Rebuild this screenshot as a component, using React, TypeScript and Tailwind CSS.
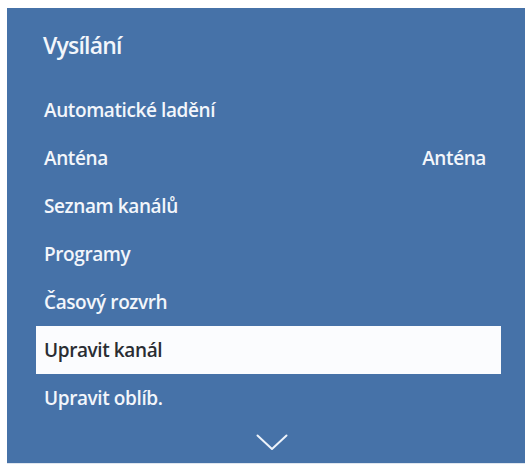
import React from 'react';

const items = [
  { label: 'Automatické ladění' },
  { label: 'Anténa', value: 'Anténa' },
  { label: 'Seznam kanálů' },
  { label: 'Programy' },
  { label: 'Časový rozvrh' },
  { label: 'Upravit kanál', selected: true },
  { label: 'Upravit oblíb.' },
];

const App: React.FC = () => {
  return (
    <div
      className="w-[532px] h-[468px] bg-white pt-[8px] pl-[7px]"
      style={{ fontFamily: '"Open Sans", "Noto Sans", sans-serif' }}
    >
      <div className="w-[518px] h-[456px] bg-[#4672a8] pl-[29px] pr-[24px] flex flex-col border-b border-[#dfe6ef]">
        <div className="h-[78px] flex items-center pl-[7px] pb-[4px]">
          <h1 className="text-[23px] font-semibold text-[#f3f6fb] tracking-[-0.8px]">Vysílání</h1>
        </div>
        {items.map((item) => (
          <div
            key={item.label}
            className={
              item.selected
                ? 'h-[48px] flex items-center justify-between pl-[8px] pr-[15px] bg-[#fbfcfe] text-[#2a2d33]'
                : 'h-[48px] flex items-center justify-between pl-[8px] pr-[15px] text-[#f3f6fb]'
            }
          >
            <span className="text-[19px] font-semibold tracking-[-0.4px]">{item.label}</span>
            {item.value && (
              <span className="text-[19px] font-semibold tracking-[-0.4px]">{item.value}</span>
            )}
          </div>
        ))}
        <div className="flex-1 flex items-center justify-center pl-[6px]">
          <svg width="32" height="17" viewBox="0 0 32 17" fill="none">
            <path d="M1.5 1.5 L16 15 L30.5 1.5" stroke="#eef3fa" strokeWidth="2" strokeLinecap="round" strokeLinejoin="round" />
          </svg>
        </div>
      </div>
    </div>
  );
};

export default App;
